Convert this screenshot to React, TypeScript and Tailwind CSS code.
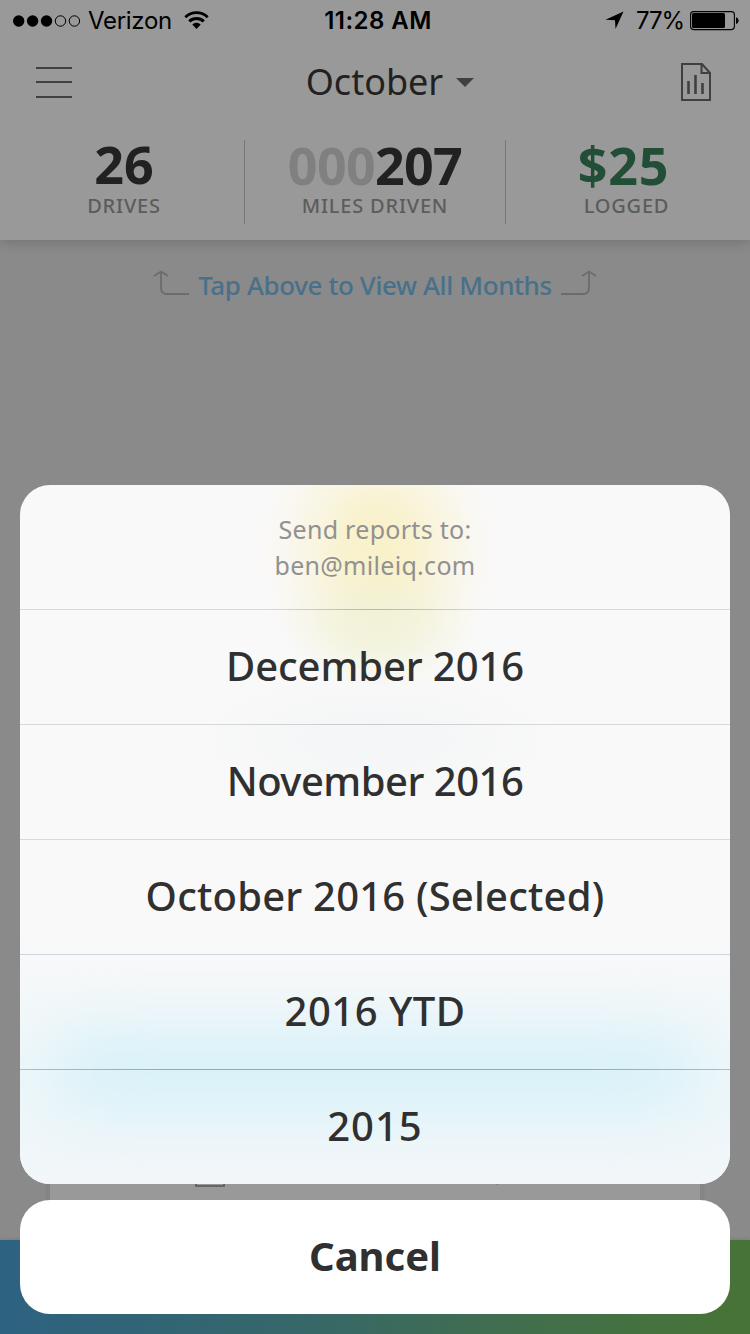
import { useState } from "react";

type ReportOption = {
  label: string;
  line: string;
  tracking: string;
};

const reportOptions: ReportOption[] = [
  {
    label: "December 2016",
    line: "bg-[linear-gradient(90deg,#d8d9da_35%,#c2bf55_50%,#d8d9da_66%)]",
    tracking: "tracking-[-0.1px]",
  },
  {
    label: "November 2016",
    line: "bg-[linear-gradient(90deg,#d8d9da_25%,#c6c9d1_50%,#d8d9da_75%)]",
    tracking: "tracking-[-0.5px]",
  },
  {
    label: "October 2016 (Selected)",
    line: "bg-[#d8d9da]",
    tracking: "tracking-[0.2px]",
  },
  { label: "2016 YTD", line: "bg-[#d0d2dc]", tracking: "tracking-[0.5px]" },
  {
    label: "2015",
    line: "bg-[linear-gradient(90deg,#8fcad8,#62bfd0_20%,#62bfd0_80%,#8fcad8)]",
    tracking: "tracking-[1px]",
  },
];

const StatusBar = () => (
  <div className="h-[41px] flex items-center justify-between pl-[13px] pr-[11px] font-['Inter',sans-serif] text-2xl text-black">
    <div className="flex items-center w-[300px]">
      <svg width="68" height="12" viewBox="0 0 68 12">
        <circle cx="5.7" cy="6" r="5.7" />
        <circle cx="19.6" cy="6" r="5.7" />
        <circle cx="33.5" cy="6" r="5.7" />
        <circle cx="47.5" cy="6" r="5.2" fill="none" stroke="black" />
        <circle cx="61.4" cy="6" r="5.2" fill="none" stroke="black" />
      </svg>
      <span className="ml-[7px] tracking-[-0.3px]">Verizon</span>
      <svg className="ml-3" width="25" height="19" viewBox="0 0 25 19">
        <path
          d="M1.3 6.2C7.7.1 17.3.1 23.7 6.2M5.2 10.4C9.3 6.5 15.7 6.5 19.8 10.4"
          fill="none"
          stroke="black"
          strokeWidth="2.9"
        />
        <path d="M8.3 13.4C10.7 11.2 14.3 11.2 16.7 13.4L12.5 17.9Z" />
      </svg>
    </div>
    <span className="ml-1 font-semibold tracking-[0.45px]">11:28 AM</span>
    <div className="flex items-center justify-end w-[300px]">
      <svg width="19" height="19" viewBox="0 0 19 19">
        <path d="M18.5.5L10.5 18L10 9.2L.5 8.7Z" />
      </svg>
      <span className="ml-3 tracking-[-1.1px]">77%</span>
      <svg className="ml-1.5" width="49" height="20" viewBox="0 0 49 20">
        <rect
          x=".6"
          y=".6"
          width="43.8"
          height="18"
          rx="3"
          fill="none"
          stroke="black"
          strokeWidth="1.1"
        />
        <rect x="2" y="2" width="33" height="15" rx="1.5" />
        <path d="M46 6.3Q48.7 7 48.7 9.6T46 12.9Z" />
      </svg>
    </div>
  </div>
);

const NavBar = () => (
  <div className="h-[89px] flex items-start justify-between pl-9 pr-[38px] text-[#212121]">
    <svg className="mt-[26px]" width="36" height="32" viewBox="0 0 36 32">
      <path
        d="M0 1H36M0 15H36M0 30H36"
        stroke="#404040"
        strokeWidth="2"
        fill="none"
      />
    </svg>
    <div className="flex items-center h-[82px] ml-[27px]">
      <span className="text-[36px]">October</span>
      <svg className="ml-[13px]" width="18" height="9" viewBox="0 0 18 9">
        <path d="M0 0H18L9 9Z" fill="#404040" />
      </svg>
    </div>
    <svg className="mt-[22px]" width="31" height="38" viewBox="0 0 31 38">
      <path
        d="M1 1H21L29 10V37H1Z M20.5 1V10H29"
        fill="none"
        stroke="#404040"
        strokeWidth="2"
      />
      <path
        d="M7.5 18V31M14.5 12V31M21.5 20V31"
        fill="none"
        stroke="#404040"
        strokeWidth="2.6"
      />
    </svg>
  </div>
);

const StatLabel = ({ text }: { text: string }) => (
  <span className="font-medium text-[20px] leading-[30px] tracking-[0.8px] text-[#5c5c5c]">
    {text}
  </span>
);

const Stats = () => (
  <div className="h-[110px] flex pt-2.5 text-[#212121]">
    <div className="w-[244px] pl-1 flex flex-col items-center">
      <span className="h-[51px] text-[52px] leading-[48px] font-bold">26</span>
      <StatLabel text="DRIVES" />
    </div>
    <div className="w-[262px] h-[84px] border-x border-[#777] flex flex-col items-center">
      <span className="h-[51px] text-[52px] leading-[49px] font-bold tracking-[-0.7px]">
        <span className="text-[#808080]">000</span>207
      </span>
      <StatLabel text="MILES DRIVEN" />
    </div>
    <div className="w-[244px] pr-[3px] flex flex-col items-center">
      <span className="h-[51px] text-[52px] leading-[49px] font-bold tracking-[0.8px] text-[#224d37] mr-1.5">
        $25
      </span>
      <StatLabel text="LOGGED" />
    </div>
  </div>
);

const MonthsHint = () => (
  <div className="flex items-start justify-center pt-[30px] text-[#48708a]">
    <svg width="37" height="26" viewBox="0 0 37 26">
      <path
        d="M1 6L8 1.5L15 6M8 2V18Q8 24 14 24H36"
        fill="none"
        stroke="#6c6c6c"
        strokeWidth="1.8"
      />
    </svg>
    <span className="mx-2 -mt-[3px] text-[26px] leading-9 font-medium tracking-[-0.4px]">
      Tap Above to View All Months
    </span>
    <svg width="37" height="26" viewBox="0 0 37 26">
      <path
        d="M36 6L29 1.5L22 6M29 2V18Q29 24 23 24H1"
        fill="none"
        stroke="#6c6c6c"
        strokeWidth="1.8"
      />
    </svg>
  </div>
);

const ReportSheet = () => {
  const [isOpen, setIsOpen] = useState(true);
  if (!isOpen) return null;

  return (
    <div className="absolute inset-x-5 bottom-5 flex flex-col gap-4 text-[#303030]">
      <div className="relative overflow-hidden rounded-[30px] bg-[#f9f9f9]">
        {/* Colours of the drive card showing through the sheet */}
        <div className="absolute left-[238px] -top-[75px] w-[240px] h-[280px] bg-[radial-gradient(closest-side,#f9f1c8,#f9f1c8d9_30%,#f9f1c873_57%,#f9f1c826_80%,#f9f1c800)]" />
        <div className="absolute left-[258px] top-[75px] w-[200px] h-[130px] bg-[radial-gradient(closest-side,#eef1d5b3,#eef1d580_40%,#eef1d533_70%,#eef1d500)]" />
        <div className="absolute left-[170px] top-[185px] w-[370px] h-[140px] bg-[radial-gradient(closest-side,#f5f6f7_30%,#f5f6f780_65%,#f5f6f700)]" />
        <div className="absolute -left-5 top-[450px] w-[750px] h-[270px] bg-[linear-gradient(180deg,#eef7fa00,#eef7fa_45%,#eef7fa_65%,#f1f6f9_85%,#f4f7f9)]" />
        <div className="absolute left-[35px] top-[552px] w-[640px] h-[68px] rounded-full bg-[#d4f0f8] blur-[32px]" />

        <div className="relative">
          <div className="h-[124px] pt-[26px] text-center text-[25px] leading-9 tracking-[0.3px] text-[#919191]">
            <p>Send reports to:</p>
            <p>ben@mileiq.com</p>
          </div>
          {reportOptions.map((option) => (
            <button
              className="flex flex-col items-center w-full h-[115px] cursor-pointer"
              key={option.label}
              onClick={() => setIsOpen(false)}
            >
              <div className={`h-px w-full ${option.line}`} />
              <span
                className={`flex h-[112px] items-center justify-center text-[40px] font-medium ${option.tracking}`}
              >
                {option.label}
              </span>
            </button>
          ))}
        </div>
      </div>
      <button
        className="h-[114px] pb-0.5 rounded-[30px] bg-white text-[40px] font-bold cursor-pointer"
        onClick={() => setIsOpen(false)}
      >
        Cancel
      </button>
    </div>
  );
};

export default function App() {
  return (
    <div className="relative w-[750px] h-[1334px] overflow-hidden flex flex-col bg-[#8a8a8a] font-['Noto_Sans',sans-serif]">
      <header className="h-60 bg-[#999] shadow-[0_2px_12px_rgba(0,0,0,0.18)]">
        <StatusBar />
        <NavBar />
        <Stats />
      </header>
      <main className="flex-1 flex flex-col">
        <MonthsHint />
        {/* Bottom edge of the drive card */}
        <div className="mt-auto mb-8 mx-12 h-[120px] flex items-start border-x-2 border-[#858585] bg-[#999] shadow-[0_0_4px_rgba(0,0,0,0.12)]">
          <div className="ml-[145px] mt-[75px] h-6 w-[30px] border-2 border-[#666]" />
          <div className="ml-[270px] mt-[94px] h-[3px] w-1 rounded-b-full bg-[#7d8a85]" />
        </div>
      </main>
      <footer className="h-[94px] bg-[linear-gradient(97deg,#2d6282,#36676a_40%,#416f4c_70%,#477339_95%)] shadow-[0_0_4px_rgba(0,0,0,0.15)]" />
      <ReportSheet />
    </div>
  );
}
